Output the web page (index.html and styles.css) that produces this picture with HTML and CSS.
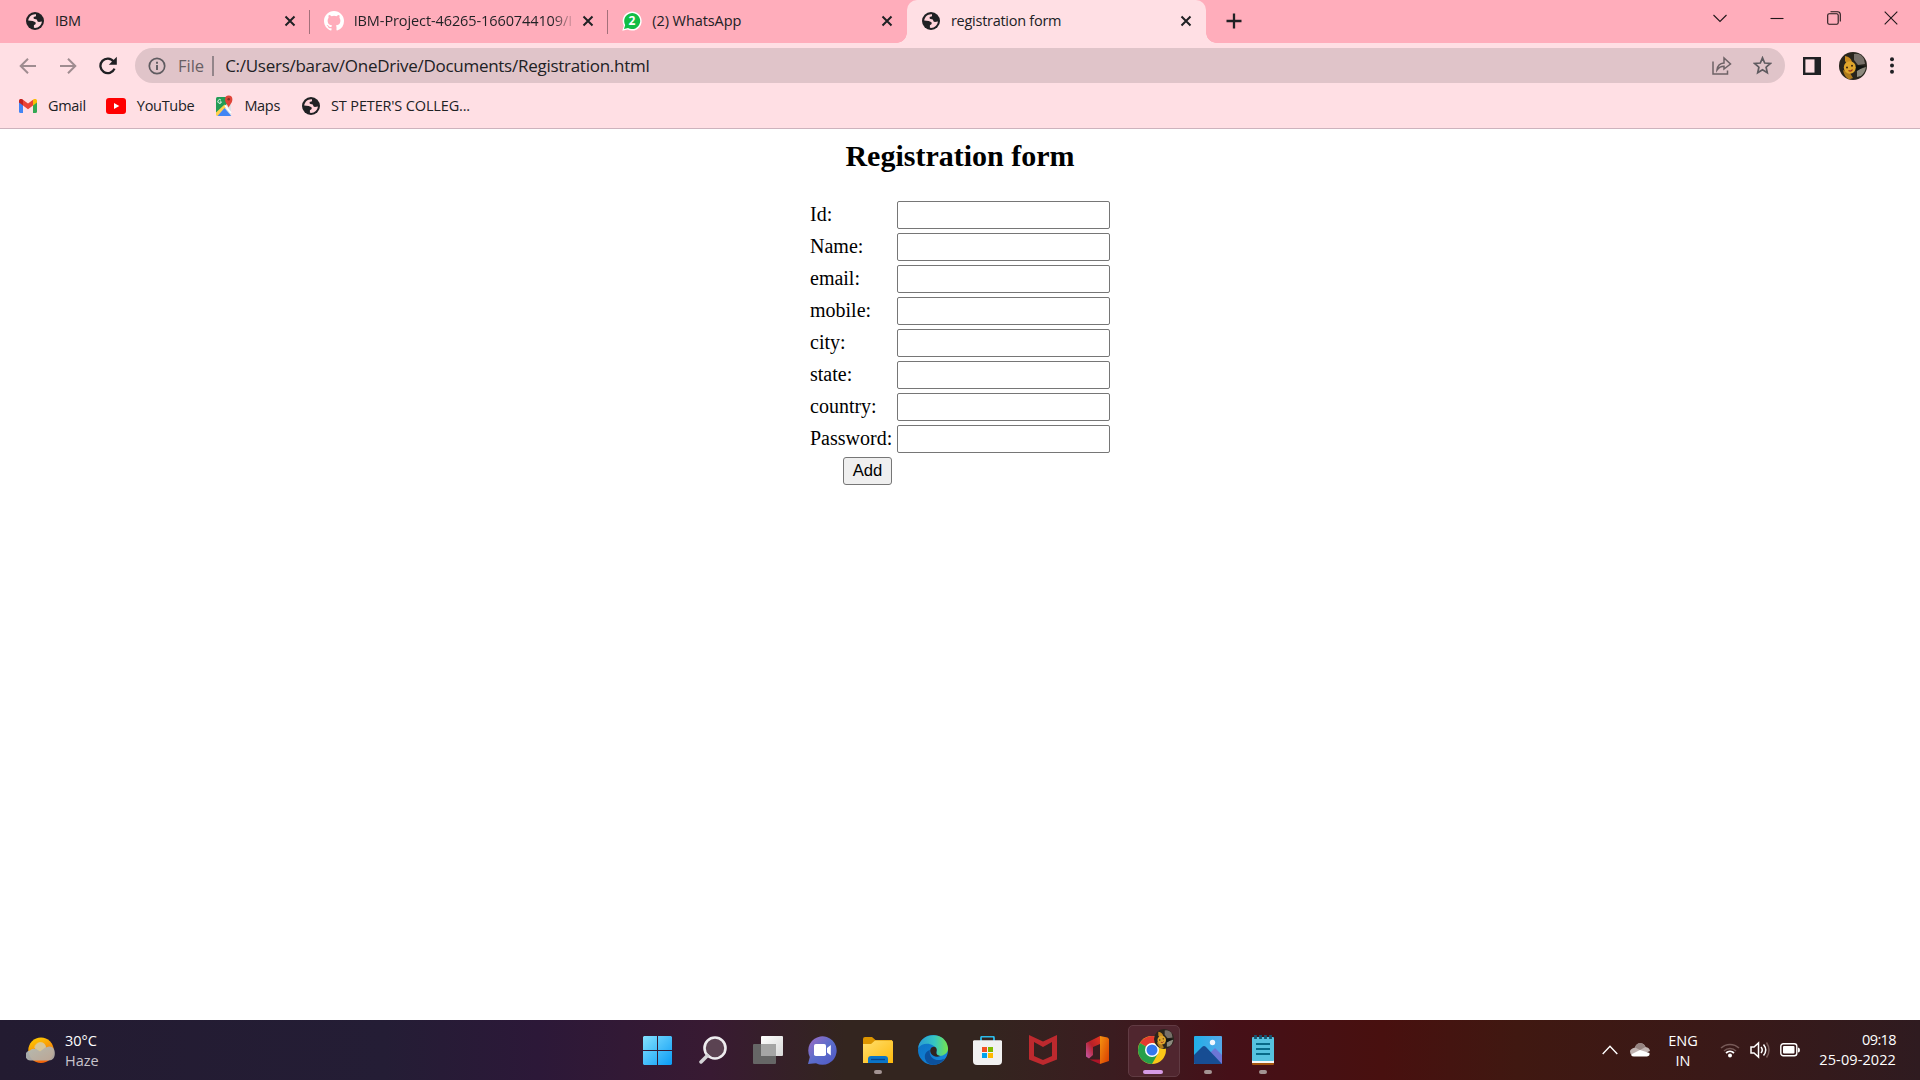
FILE: index.html
```html
<!DOCTYPE html>
<html lang="en">
<head>
<meta charset="utf-8">
<title>registration form</title>
<link rel="stylesheet" href="styles.css">
</head>
<body>
<svg class="defs" aria-hidden="true">
  <defs>
    <symbol id="globe" viewBox="0 0 18 18"><circle cx="9" cy="9" r="9" fill="#202124"/><path d="M10 2.200C6 1.700 2.600 4.600 2.200 8.600l4.600.3 2.700 1.400.2 1.700-1.800 1.200v2.600c4.200.6 7.700-2.300 8-6.300l-3 .6-1.300-.7-.8-1.900-3-.7-.2-1.700 2.400-.9z" fill="#ffd3da"/></symbol>
    <symbol id="close" viewBox="0 0 12 12"><path d="M1.500 1.500l9 9M10.500 1.500l-9 9" stroke="#202124" stroke-width="2" fill="none"/></symbol>
    <symbol id="avatar" viewBox="0 0 28 28"><circle cx="14" cy="14" r="14" fill="#29251d"/><path d="M15 2q7-1 10 5l1 5-7 1-4-5z" fill="#777069"/><path d="M18 18l9-3q-1 6-5 9l-4 1z" fill="#8d8a7e"/><path d="M6 4q6 1 7 6l-5 2-2-3z" fill="#c98c20"/><path d="M15 13l11 1-8 5-3-1z" fill="#101412"/><path d="M4 18l7 3 3 5-4 1.500q-5-3-6-9.500z" fill="#b07a1c"/><ellipse cx="10.800" cy="15.500" rx="6" ry="6.200" fill="#dfa62c"/><circle cx="8" cy="15.500" r="1" fill="#38220e"/><circle cx="13" cy="13.800" r="1" fill="#38220e"/><path d="M9.500 18.500q2.500 1.500 4-1" stroke="#9b321d" stroke-width="1.300" fill="none"/></symbol>
  </defs>
</svg>

<header class="browser">
  <div class="tabstrip">
    <div class="tab">
      <svg class="favicon" width="18" height="18"><use href="#globe"/></svg>
      <span class="tab-title">IBM</span>
      <svg class="tab-close" width="12" height="12"><use href="#close"/></svg>
    </div>
    <div class="tab">
      <svg class="favicon" width="20" height="20" viewBox="0 0 16 16"><path fill="#fff" d="M8 0C3.580 0 0 3.580 0 8c0 3.540 2.290 6.530 5.470 7.590.4.070.55-.17.55-.38 0-.19-.01-.82-.01-1.490-2.010.37-2.530-.49-2.690-.94-.09-.23-.48-.94-.82-1.130-.28-.15-.68-.52-.01-.53.63-.01 1.080.58 1.230.82.72 1.210 1.870.87 2.330.66.070-.52.280-.87.510-1.070-1.780-.2-3.640-.89-3.640-3.950 0-.87.310-1.590.820-2.150-.08-.2-.36-1.020.080-2.120 0 0 .67-.21 2.200.82a7.600 7.600 0 0 1 4 0c1.530-1.040 2.200-.82 2.200-.82.44 1.100.16 1.920.080 2.120.51.56.82 1.270.82 2.150 0 3.070-1.870 3.750-3.650 3.950.29.25.54.73.54 1.480 0 1.070-.01 1.930-.01 2.200 0 .21.15.46.55.38A8 8 0 0 0 16 8c0-4.420-3.580-8-8-8z"/></svg>
      <span class="tab-title fade">IBM-Project-46265-1660744109/I</span>
      <svg class="tab-close" width="12" height="12"><use href="#close"/></svg>
    </div>
    <div class="tab">
      <svg class="favicon" width="20" height="20" viewBox="0 0 20 20"><path d="M.3 19.700l1.500-5A9.500 9.500 0 1 1 5.500 18.400z" fill="#fff"/><path d="M2 18l1.200-4A8 8 0 1 1 6 16.900z" fill="#12bd45"/><text x="10" y="14.200" text-anchor="middle" class="badge-number">2</text></svg>
      <span class="tab-title whatsapp">(2) WhatsApp</span>
      <svg class="tab-close" width="12" height="12"><use href="#close"/></svg>
    </div>
    <div class="tab active">
      <svg class="favicon" width="18" height="18"><use href="#globe"/></svg>
      <span class="tab-title">registration form</span>
      <svg class="tab-close" width="12" height="12"><use href="#close"/></svg>
    </div>
    <svg class="new-tab" width="16" height="16" viewBox="0 0 16 16"><path d="M8 .5v15M.5 8h15" stroke="#202124" stroke-width="2.300"/></svg>
    <div class="window-controls">
      <svg width="14" height="14" viewBox="0 0 14 14"><path d="M.5 4L7 10.500 13.500 4"/></svg>
      <svg width="14" height="14" viewBox="0 0 14 14"><path d="M.5 7.500h13"/></svg>
      <svg width="14" height="14" viewBox="0 0 14 14"><rect x=".7" y="2.700" width="10.500" height="10.500" rx="1.500"/><path d="M3.500 .7h7a2.800 2.800 0 0 1 2.800 2.800v7"/></svg>
      <svg width="14" height="14" viewBox="0 0 14 14"><path d="M.7.700l12.600 12.600M13.300.7L.7 13.300"/></svg>
    </div>
  </div>

  <div class="toolbar">
    <svg class="nav" width="18" height="18" viewBox="0 0 18 18"><path d="M17 9H2M9 1.700L1.700 9 9 16.300" fill="none" stroke="#9f8c90" stroke-width="2"/></svg>
    <svg class="nav forward" width="18" height="18" viewBox="0 0 18 18"><path d="M1 9h15M9 1.700L16.300 9 9 16.300" fill="none" stroke="#9f8c90" stroke-width="2"/></svg>
    <svg class="nav reload" width="18" height="20" viewBox="0 0 18 20"><path d="M15.500 12.600A7.300 7.300 0 1 1 14.600 5.500" fill="none" stroke="#202124" stroke-width="2.300"/><path d="M17.800 .8v8h-8z" fill="#202124"/></svg>
    <div class="omnibox">
      <svg class="info" width="18" height="18" viewBox="0 0 18 18"><circle cx="9" cy="9" r="7.700" fill="none" stroke="#5f5b60" stroke-width="1.700"/><path d="M9 8v5M9 4.800v2" stroke="#5f5b60" stroke-width="1.900"/></svg>
      <span class="scheme">File</span>
      <span class="divider"></span>
      <span class="url">C:/Users/barav/OneDrive/Documents/Registration.html</span>
      <svg class="share" width="20" height="19" viewBox="0 0 20 19"><path d="M1 5.500V18h14.500v-3.500M5 14c.4-4.500 3-6.600 7-7V2l6.500 6-6.500 5V10.300c-3 0-5.200 1.200-7 3.700z" fill="none" stroke="#6d6266" stroke-width="1.500"/></svg>
      <svg width="19" height="19" viewBox="0 0 19 19"><path d="M9.500 1.800l2.200 5.200 5.600.5-4.200 3.700 1.200 5.500-4.800-2.900-4.800 2.900 1.200-5.500L1.700 7.500 7.300 7z" fill="none" stroke="#5f5b60" stroke-width="1.700"/></svg>
    </div>
    <svg class="panel" width="18" height="18" viewBox="0 0 18 18"><rect x="1.200" y="1.200" width="15.600" height="15.600" fill="#ffdfe4" stroke="#202124" stroke-width="2.400"/><path d="M11.500 1H17v16h-5.500z" fill="#202124"/></svg>
    <svg class="profile" width="28" height="28"><use href="#avatar"/></svg>
    <svg class="menu" width="4" height="17" viewBox="0 0 4 17"><circle cx="2" cy="2.200" r="2"/><circle cx="2" cy="8.500" r="2"/><circle cx="2" cy="14.800" r="2"/></svg>
  </div>

  <nav class="bookmarks">
    <a class="bookmark gmail"><svg width="18" height="14" viewBox="0 0 18 14"><path d="M0 2v10.500q0 1.500 1.500 1.500H4V5z" fill="#4285f4"/><path d="M18 2v10.500q0 1.500-1.500 1.500H14V5z" fill="#34a853"/><path d="M4 6.500V.8l5 3.800 5-3.800v5.700l-5 3.800z" fill="#ea4335"/><path d="M0 3.500V2C0 0 2-.7 3.300.2L4 .8v5.700z" fill="#c5221f"/><path d="M18 3.500V2c0-2-2-2.700-3.300-1.800L14 .8v5.700z" fill="#fbbc04"/></svg><span>Gmail</span></a>
    <a class="bookmark youtube"><svg width="20" height="16" viewBox="0 0 20 16"><rect width="20" height="16" rx="3" fill="#f00"/><path d="M8 5l5.300 3L8 11z" fill="#fff"/></svg><span>YouTube</span></a>
    <a class="bookmark maps"><svg width="19" height="22" viewBox="0 0 19 22"><rect x="1" y="2" width="15" height="19" rx="1.500" fill="#dce1e4"/><path d="M1 3.500Q1 2 2.500 2H13v6L1 18z" fill="#239b55"/><path d="M1 17.500l8.500-8 2 2.500-8.500 9Q1 21 1 19.500z" fill="#ffd04b"/><path d="M2.500 21l7-8 6.800 8z" fill="#4285f4"/><path d="M10 10.500l6 7.500" stroke="#fff" stroke-width="1.600"/><path d="M13.700 12.500C12.500 9.500 10 8 10 4.300a3.700 3.900 0 0 1 7.400 0c0 3.700-2.500 5.200-3.700 8.200z" fill="#e04438"/><circle cx="13.700" cy="4.300" r="1.300" fill="#862e25"/><path d="M6 5.200a1.800 1.900 0 1 0 .4 1.700H4.800" fill="none" stroke="#fff" stroke-width=".9"/></svg><span>Maps</span></a>
    <a class="bookmark college"><svg width="18" height="18"><use href="#globe"/></svg><span>ST PETER'S COLLEG...</span></a>
  </nav>
</header>

<main class="page">
  <h2>Registration form</h2>
  <form class="registration">
    <label for="id">Id:</label><input id="id">
    <label for="name">Name:</label><input id="name">
    <label for="email">email:</label><input id="email">
    <label for="mobile">mobile:</label><input id="mobile">
    <label for="city">city:</label><input id="city">
    <label for="state">state:</label><input id="state">
    <label for="country">country:</label><input id="country">
    <label for="password">Password:</label><input id="password" type="password">
    <button type="button">Add</button>
  </form>
</main>

<footer class="taskbar">
  <div class="weather">
    <svg width="29" height="27" viewBox="0 0 29 27"><defs><linearGradient id="sun" x2=".4" y2="1"><stop stop-color="#ffd400"/><stop offset="1" stop-color="#f3650a"/></linearGradient><linearGradient id="haze" x2="1" y2="1"><stop stop-color="#aebdc2"/><stop offset="1" stop-color="#b8ab9e"/></linearGradient></defs><circle cx="15" cy="13.300" r="12.700" fill="url(#sun)"/><path d="M5 23.500a5 5 0 0 1-1-10q2-2.500 5-1.500c0-8 10-9 11-1.500 6-3 9 1 8.800 6 0 4-2 7-6 7z" fill="url(#haze)" opacity=".93"/><path d="M8 10.500q1.500-5 6-5.500 5 0 6 5l-6 4.500z" fill="#e9cf8e" opacity=".65"/></svg>
    <div class="weather-text"><span class="temp">30°C</span><span class="haze">Haze</span></div>
  </div>

  <div class="apps">
    <div class="app"><svg width="29" height="29" viewBox="0 0 29 29"><defs><linearGradient id="win" x2="1" y2="1"><stop stop-color="#84e1ff"/><stop offset="1" stop-color="#0a9cf5"/></linearGradient></defs><path d="M1 0h13v14H0V1zM15 0h13l1 1v13H15zM0 15h14v14H1l-1-1zM15 15h14v13l-1 1H15z" fill="url(#win)"/></svg></div>
    <div class="app"><svg width="28" height="29" viewBox="0 0 28 29"><circle cx="16" cy="12" r="10.500" fill="#5b4352" stroke="#eeedef" stroke-width="2.600"/><path d="M8.500 19.500L2 26" stroke="#d4d4d6" stroke-width="3.500" stroke-linecap="round"/></svg></div>
    <div class="app"><svg width="30" height="28" viewBox="0 0 30 28"><defs><linearGradient id="front" x2="1" y2="1"><stop stop-color="#fff"/><stop offset="1" stop-color="#d8d8d8"/></linearGradient></defs><rect x="8" width="22" height="20" rx="1" fill="url(#front)"/><rect y="8" width="23" height="20" rx="1" fill="#666"/><path d="M8 8h15v12H8z" fill="#a5a5a5"/></svg></div>
    <div class="app"><svg width="29" height="29" viewBox="0 0 29 29"><defs><linearGradient id="chat" x2="1" y2="1"><stop stop-color="#a06bc4"/><stop offset=".5" stop-color="#5b6dcb"/><stop offset="1" stop-color="#5057c5"/></linearGradient></defs><path d="M0 28l1.800-7A14.200 14.200 0 1 1 8 27.200z" fill="url(#chat)"/><rect x="6" y="8" width="12" height="12" rx="1.800" fill="#fff"/><path d="M19 12l3.800-3v10.500L19 16.500z" fill="#fff"/></svg></div>
    <div class="app running"><svg width="30" height="27" viewBox="0 0 30 27"><defs><linearGradient id="folder" x2="1" y2="1"><stop stop-color="#ffdf6d"/><stop offset="1" stop-color="#ffb90b"/></linearGradient></defs><path d="M0 2Q0 0 2 0h7l3.500 3H29v8H0z" fill="#dc9500"/><path d="M0 7h8l4-3.500h17l1 1V26H0z" fill="url(#folder)"/><path d="M5 22q0-3 3-3h14q3 0 3 3v4H5z" fill="#0a75c8"/><path d="M8 22.500h14" stroke="#07448c" stroke-width="1.300"/></svg></div>
    <div class="app"><svg width="30" height="30" viewBox="0 0 30 30"><defs><linearGradient id="edgetop"><stop stop-color="#289bd5"/><stop offset=".55" stop-color="#36c6c1"/><stop offset="1" stop-color="#76e54a"/></linearGradient><linearGradient id="edgelow" y2="1"><stop stop-color="#0b70c0"/><stop offset="1" stop-color="#168ae0"/></linearGradient></defs><circle cx="15" cy="15" r="15" fill="url(#edgelow)"/><path d="M.2 13C2-3 28-5 30 13c.5 6-6 9-10.500 7.500-2.500-1-.5-2.500-.8-5C17 8 5 6 .2 13z" fill="url(#edgetop)"/><path d="M12 15c-2 7 6 13 14.500 8.500-3 5-9 7.500-14 6-8-3-7-13-.5-14.500z" fill="#0c519d"/><path d="M13.500 12.500c4-2 6 1 5 4-.5 2 .5 4 4 4.500-7 3-13-4-9-8.500z" fill="#31231f"/></svg></div>
    <div class="app"><svg width="29" height="29" viewBox="0 0 29 29"><path d="M8 7V2q0-1.500 1.500-1.500h10Q21 .5 21 2v5" fill="none" stroke="#2cbbe9" stroke-width="1.800"/><path d="M0 5l1-.8h27l1 .8v20q0 4-4 4H4q-4 0-4-4z" fill="#f1f1f1"/><path d="M9 11h5v5H9z" fill="#f25022"/><path d="M15 11h5v5h-5z" fill="#7fba00"/><path d="M9 17h5v5H9z" fill="#00a4ef"/><path d="M15 17h5v5h-5z" fill="#ffb900"/></svg></div>
    <div class="app"><svg width="28" height="30" viewBox="0 0 28 30"><path d="M0 0l14 6.500L28 0v24.500L14 30 0 24.500zM5 7v14l9 4 9-4V7l-9 5z" fill="#bd292e" fill-rule="evenodd"/></svg></div>
    <div class="app"><svg width="23" height="28" viewBox="0 0 23 28"><defs><linearGradient id="office" x1="1" x2="0" y2="1"><stop stop-color="#e2341e"/><stop offset=".5" stop-color="#b72029"/><stop offset="1" stop-color="#c55cae"/></linearGradient><linearGradient id="office2" y2="1"><stop stop-color="#f69410"/><stop offset="1" stop-color="#d83b01"/></linearGradient></defs><path d="M0 7L14 0v8l-7 3v8l-4 3.500-3-2z" fill="url(#office)"/><path d="M14 0l7.500 1.500L23 3v22l-9 3z" fill="url(#office2)"/><path d="M3.500 23.500H14V28z" fill="#ad1427"/></svg></div>
    <div class="app current"><svg class="chrome-icon" width="28" height="28" viewBox="0 0 28 28"><circle cx="14" cy="14" r="14" fill="#fbc718"/><path d="M14 14L1.900 7A14 14 0 0 1 26.100 7H14z" fill="#e43b30"/><path d="M1.900 7A14 14 0 0 0 14 28l6-10.500-6-3.500z" fill="#26a04a"/><circle cx="14" cy="14" r="7" fill="#fff"/><circle cx="14" cy="14" r="5.500" fill="#3478ee"/></svg><svg class="app-avatar" width="20" height="20"><use href="#avatar"/></svg></div>
    <div class="app running"><svg width="28" height="28" viewBox="0 0 28 28"><defs><linearGradient id="sky"><stop stop-color="#20afe8"/><stop offset="1" stop-color="#55a8e9"/></linearGradient></defs><rect width="28" height="28" rx="1" fill="url(#sky)"/><path d="M14 19l7-7 7 7v9H16z" fill="#6c76d6"/><path d="M0 19l8-8q2-2 4 0l16 17H1l-1-1z" fill="#174d93"/><circle cx="18.500" cy="6.500" r="2.700" fill="#f1f7ff"/></svg></div>
    <div class="app running"><svg width="22" height="30" viewBox="0 0 22 30"><rect y="24" width="22" height="6" rx="1" fill="#a4550d"/><rect y="23" width="22" height="5" fill="#f7f7f7"/><rect y="2" width="22" height="24" rx="1" fill="#56c2df"/><path d="M4 9h14M4 14h14M4 19h14" stroke="#076a88" stroke-width="1.800"/><path d="M3.500 0v4M8.500 0v4M13.500 0v4M18.500 0v4" stroke="#155571" stroke-width="2.800"/></svg></div>
  </div>

  <div class="tray">
    <svg class="chevron" width="16" height="10" viewBox="0 0 16 10"><path d="M.7 9L8 1.300 15.300 9" fill="none" stroke="#fff" stroke-width="1.400"/></svg>
    <svg class="cloud" width="20" height="14" viewBox="0 0 20 14"><path d="M5 4.500A5.500 5.500 0 0 1 15.500 4q4 .5 4.500 4l-5 2L2 12Q0 11 0 8.500T5 4.500z" fill="#c1b4b2"/><path d="M5 4.500A5.500 5.500 0 0 1 15.500 4L10 7z" fill="#968481"/><path d="M2 11l8-4 9.500 3Q20 13 17 13.500H4Q2 13.500 1 12z" fill="#fff"/></svg>
    <div class="lang"><span>ENG</span><span>IN</span></div>
    <svg class="wifi" width="20" height="16" viewBox="0 0 20 16" fill="none"><path d="M1 6a13 13 0 0 1 18 0" stroke="#775a58" stroke-width="1.500"/><path d="M4 9a8.500 8.500 0 0 1 12 0" stroke="#775a58" stroke-width="1.500"/><path d="M6 11a6 6 0 0 1 8 0" stroke="#fff" stroke-width="1.700"/><circle cx="10" cy="13.500" r="2" fill="#fff"/></svg>
    <svg class="sound" width="20" height="18" viewBox="0 0 20 18" fill="none" stroke="#fff" stroke-width="1.500"><path d="M1 6v6h3l4.500 4V2L4 6z"/><path d="M11 6q2.500 3 0 6M13.500 3.500q4.500 5.500 0 11"/><path d="M16.500 1.500q5 7.500 0 15" stroke="#775a58"/></svg>
    <svg class="battery" width="20" height="14" viewBox="0 0 20 14"><rect x=".8" y=".8" width="16" height="12" rx="2.500" fill="none" stroke="#fff" stroke-width="1.400"/><rect x="3" y="3" width="11.500" height="7.600" rx="1" fill="#fff"/><path d="M18 4.500q2 0 2 2.500t-2 2.500z" fill="#fff"/></svg>
    <div class="clock"><span class="time">09:18</span><span class="date">25-09-2022</span></div>
  </div>
</footer>
</body>
</html>
```
FILE: styles.css
```css
* { box-sizing: border-box; }
body { margin: 0; height: 1080px; display: flex; flex-direction: column; overflow: hidden; background: #fff; font-family: "Open Sans", "Noto Sans", sans-serif; color: #202124; }
svg { display: block; flex: none; }
.defs { position: absolute; width: 0; height: 0; }
.browser { height: 129px; flex: none; background: #ffdfe4; border-bottom: 1px solid #cdb3bd; }

.tabstrip { display: flex; height: 43px; padding-left: 11px; background: #ffadbb; }
.tab { position: relative; display: flex; align-items: center; width: 298.670px; height: 43px; padding: 0 14px 2px 13px; }
.tab:not(.active)::after { content: ""; position: absolute; right: 0; top: 10px; width: 1px; height: 24px; background: #a3707a; }
.tab:nth-child(3)::after { display: none; }
.tab .favicon { margin: 0 1px; }
.tab .favicon[width="18"] { margin: 0 2px; }
.tab-title { flex: 1; min-width: 0; margin: 0 8px 0 9px; overflow: hidden; white-space: nowrap; font-size: 14.500px; line-height: 22px; letter-spacing: -0.27px; }
.tab-title.fade { letter-spacing: -0.1px; color: transparent; background: linear-gradient(90deg, #202124 198px, transparent 222px); background-clip: text; -webkit-background-clip: text; }
.tab-title.whatsapp { letter-spacing: -0.08px; }
.badge-number { font: bold 12px "Open Sans", sans-serif; fill: #fff; }
.active { background: #ffdfe4; border-radius: 10px 10px 0 0; }
.active::before, .active::after { content: ""; position: absolute; bottom: 0; width: 10px; height: 10px; }
.active::before { left: -10px; background: radial-gradient(circle at 0 0, #ffadbb 9.500px, #ffdfe4 10px); }
.active::after { right: -10px; background: radial-gradient(circle at 100% 0, #ffadbb 9.500px, #ffdfe4 10px); }
.new-tab { margin: 13px 0 0 20px; }
.window-controls { display: flex; gap: 43px; margin: 11px 22px 0 auto; fill: none; stroke: #20181a; stroke-width: 1.100; }

.toolbar { display: flex; align-items: center; height: 45px; padding-left: 19px; }
.forward { margin-left: 22px; }
.reload { margin-left: 22px; }
.omnibox { display: flex; align-items: center; width: 1650px; height: 35px; margin-left: 18px; padding: 0 13px; border-radius: 18px; background: #e0c4c9; }
.scheme { margin-left: 12px; font-size: 16.500px; color: #685f64; }
.divider { width: 2px; height: 20px; margin: 0 11px 0 8px; background: #93858a; }
.url { font-size: 17px; letter-spacing: -0.27px; white-space: nowrap; }
.share { margin: 0 21px 0 auto; }
.panel { margin-left: 18px; }
.profile { margin-left: 18px; }
.menu { margin-left: 23px; fill: #202124; }

.bookmarks { display: flex; align-items: center; height: 36px; padding-left: 19px; }
.bookmark { display: flex; align-items: center; gap: 11px; font-size: 14.500px; line-height: 20px; letter-spacing: -0.3px; white-space: nowrap; }
.youtube { margin-left: 20px; }
.bookmark.maps { margin-left: 21px; gap: 10px; }
.college { margin-left: 22px; }
.college span { letter-spacing: -0.15px; }

.page { flex: 1; min-height: 0; display: flex; flex-direction: column; align-items: center; font-family: "Liberation Serif", "Times New Roman", serif; color: #000; }
h2 { margin: 9px 0 28px; font-size: 30px; line-height: 35px; }
.registration { display: grid; grid-template-columns: 82px 213px; column-gap: 5px; row-gap: 4px; }
.registration label { height: 28px; font-size: 20px; line-height: 26px; white-space: nowrap; }
.registration input { width: 213px; height: 28px; margin: 0; border: 1px solid #767676; border-radius: 2px; background: #fff; }
.registration button { justify-self: end; width: 49px; height: 28px; padding: 0; border: 1px solid #767676; border-radius: 3px; background: #efefef; font: 16.667px/24px "Liberation Sans", Arial, sans-serif; color: #000; }

.taskbar { flex: none; display: grid; grid-template-columns: 1fr 660px 1fr; height: 60px; background: linear-gradient(90deg, #231b31 0%, #241d35 20%, #2c1838 28%, #381a32 37%, #33251f 44%, #33251f 51%, #3b1c20 58%, #451018 64%, #48100f 72%, #401811 79%, #391918 90%, #2f1b20 100%); color: #fff; font-size: 14.500px; line-height: 20px; }
.weather { display: flex; padding-left: 26px; gap: 10px; align-items: center; }
.weather-text, .lang { display: flex; flex-direction: column; padding-top: 2px; }
.haze { color: #c8c4cc; }
.apps { display: flex; align-items: center; }
.app { position: relative; display: flex; align-items: center; justify-content: center; width: 55px; height: 60px; }
.running::after, .current::after { content: ""; position: absolute; bottom: 6px; left: 24px; width: 8px; height: 4px; border-radius: 2px; background: #a39493; }
.current::before { content: ""; position: absolute; left: 3px; top: 5px; width: 50px; height: 50px; border: 1px solid #613b43; border-radius: 5px; background: #50262f; }
.current::after { left: 18px; width: 20px; background: #d69be6; }
.chrome-icon { position: relative; left: -1px; }
.app-avatar { position: absolute; left: 29px; top: 9px; }
.tray { display: flex; align-items: center; justify-content: flex-end; padding-right: 24px; }
.chevron { margin-right: 12px; }
.cloud { margin-right: 18px; }
.lang { align-items: center; width: 30px; margin-right: 22px; }
.wifi { margin-right: 10px; }
.sound { margin-right: 10px; }
.battery { margin-right: 19px; }
.clock { display: flex; flex-direction: column; align-items: flex-end; width: 77px; white-space: nowrap; }
.time { letter-spacing: -0.6px; }
.date { letter-spacing: 0.1px; }
```
